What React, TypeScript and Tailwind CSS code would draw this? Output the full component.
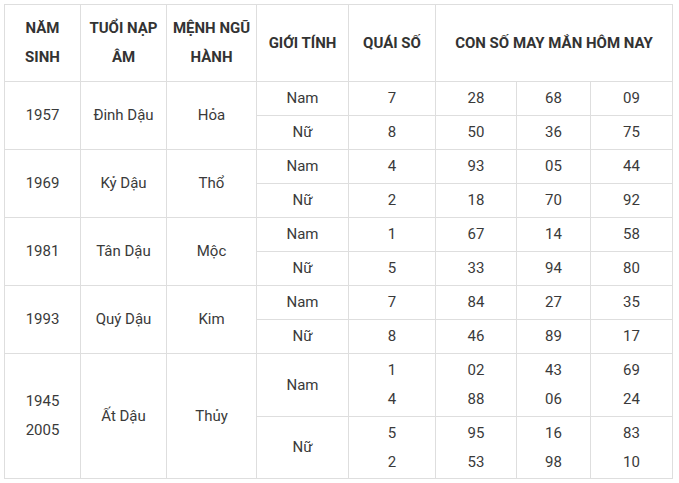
const groups = [
  {
    year: ["1957"],
    tuoi: "Đinh Dậu",
    menh: "Hỏa",
    rows: [
      { gender: "Nam", quai: ["7"], nums: [["28"], ["68"], ["09"]] },
      { gender: "Nữ", quai: ["8"], nums: [["50"], ["36"], ["75"]] },
    ],
  },
  {
    year: ["1969"],
    tuoi: "Kỷ Dậu",
    menh: "Thổ",
    rows: [
      { gender: "Nam", quai: ["4"], nums: [["93"], ["05"], ["44"]] },
      { gender: "Nữ", quai: ["2"], nums: [["18"], ["70"], ["92"]] },
    ],
  },
  {
    year: ["1981"],
    tuoi: "Tân Dậu",
    menh: "Mộc",
    rows: [
      { gender: "Nam", quai: ["1"], nums: [["67"], ["14"], ["58"]] },
      { gender: "Nữ", quai: ["5"], nums: [["33"], ["94"], ["80"]] },
    ],
  },
  {
    year: ["1993"],
    tuoi: "Quý Dậu",
    menh: "Kim",
    rows: [
      { gender: "Nam", quai: ["7"], nums: [["84"], ["27"], ["35"]] },
      { gender: "Nữ", quai: ["8"], nums: [["46"], ["89"], ["17"]] },
    ],
  },
  {
    year: ["1945", "2005"],
    tuoi: "Ất Dậu",
    menh: "Thủy",
    rows: [
      { gender: "Nam", quai: ["1", "4"], nums: [["02", "88"], ["43", "06"], ["69", "24"]] },
      { gender: "Nữ", quai: ["5", "2"], nums: [["95", "53"], ["16", "98"], ["83", "10"]] },
    ],
  },
];

function Cell({ lines, span, head }: { lines: string[]; span?: number; head?: boolean }) {
  return (
    <div
      style={span ? { gridRow: `span ${span} / span ${span}` } : undefined}
      className={`bg-white flex flex-col items-center justify-center text-center text-[15px] leading-[29px] ${
        head ? "font-bold text-[#333]" : "text-[#3a3a3a]"
      }`}
    >
      {lines.map((l, i) => (
        <span key={i}>{l}</span>
      ))}
    </div>
  );
}

export default function App() {
  return (
    <div className="w-[679px] h-[483px] bg-white pt-1 pl-1" style={{ fontFamily: "Roboto, 'Liberation Sans', sans-serif" }}>
      <div className="grid w-[669px] gap-px bg-[#dedede] p-px grid-cols-[75px_85px_89px_91px_86px_80px_73px_81px] grid-rows-[76px_repeat(8,33px)_62px_61px]">
        <Cell head lines={["NĂM", "SINH"]} />
        <Cell head lines={["TUỔI NẠP", "ÂM"]} />
        <Cell head lines={["MỆNH NGŨ", "HÀNH"]} />
        <Cell head lines={["GIỚI TÍNH"]} />
        <Cell head lines={["QUÁI SỐ"]} />
        <div className="col-span-3 bg-white flex items-center justify-center text-[15px] font-bold text-[#333]">
          CON SỐ MAY MẮN HÔM NAY
        </div>
        {groups.map((g) =>
          g.rows.map((r, ri) => (
            <>
              {ri === 0 && <Cell span={2} lines={g.year} />}
              {ri === 0 && <Cell span={2} lines={[g.tuoi]} />}
              {ri === 0 && <Cell span={2} lines={[g.menh]} />}
              <Cell lines={[r.gender]} />
              <Cell lines={r.quai} />
              {r.nums.map((n, ni) => (
                <Cell key={ni} lines={n} />
              ))}
            </>
          ))
        )}
      </div>
    </div>
  );
}
